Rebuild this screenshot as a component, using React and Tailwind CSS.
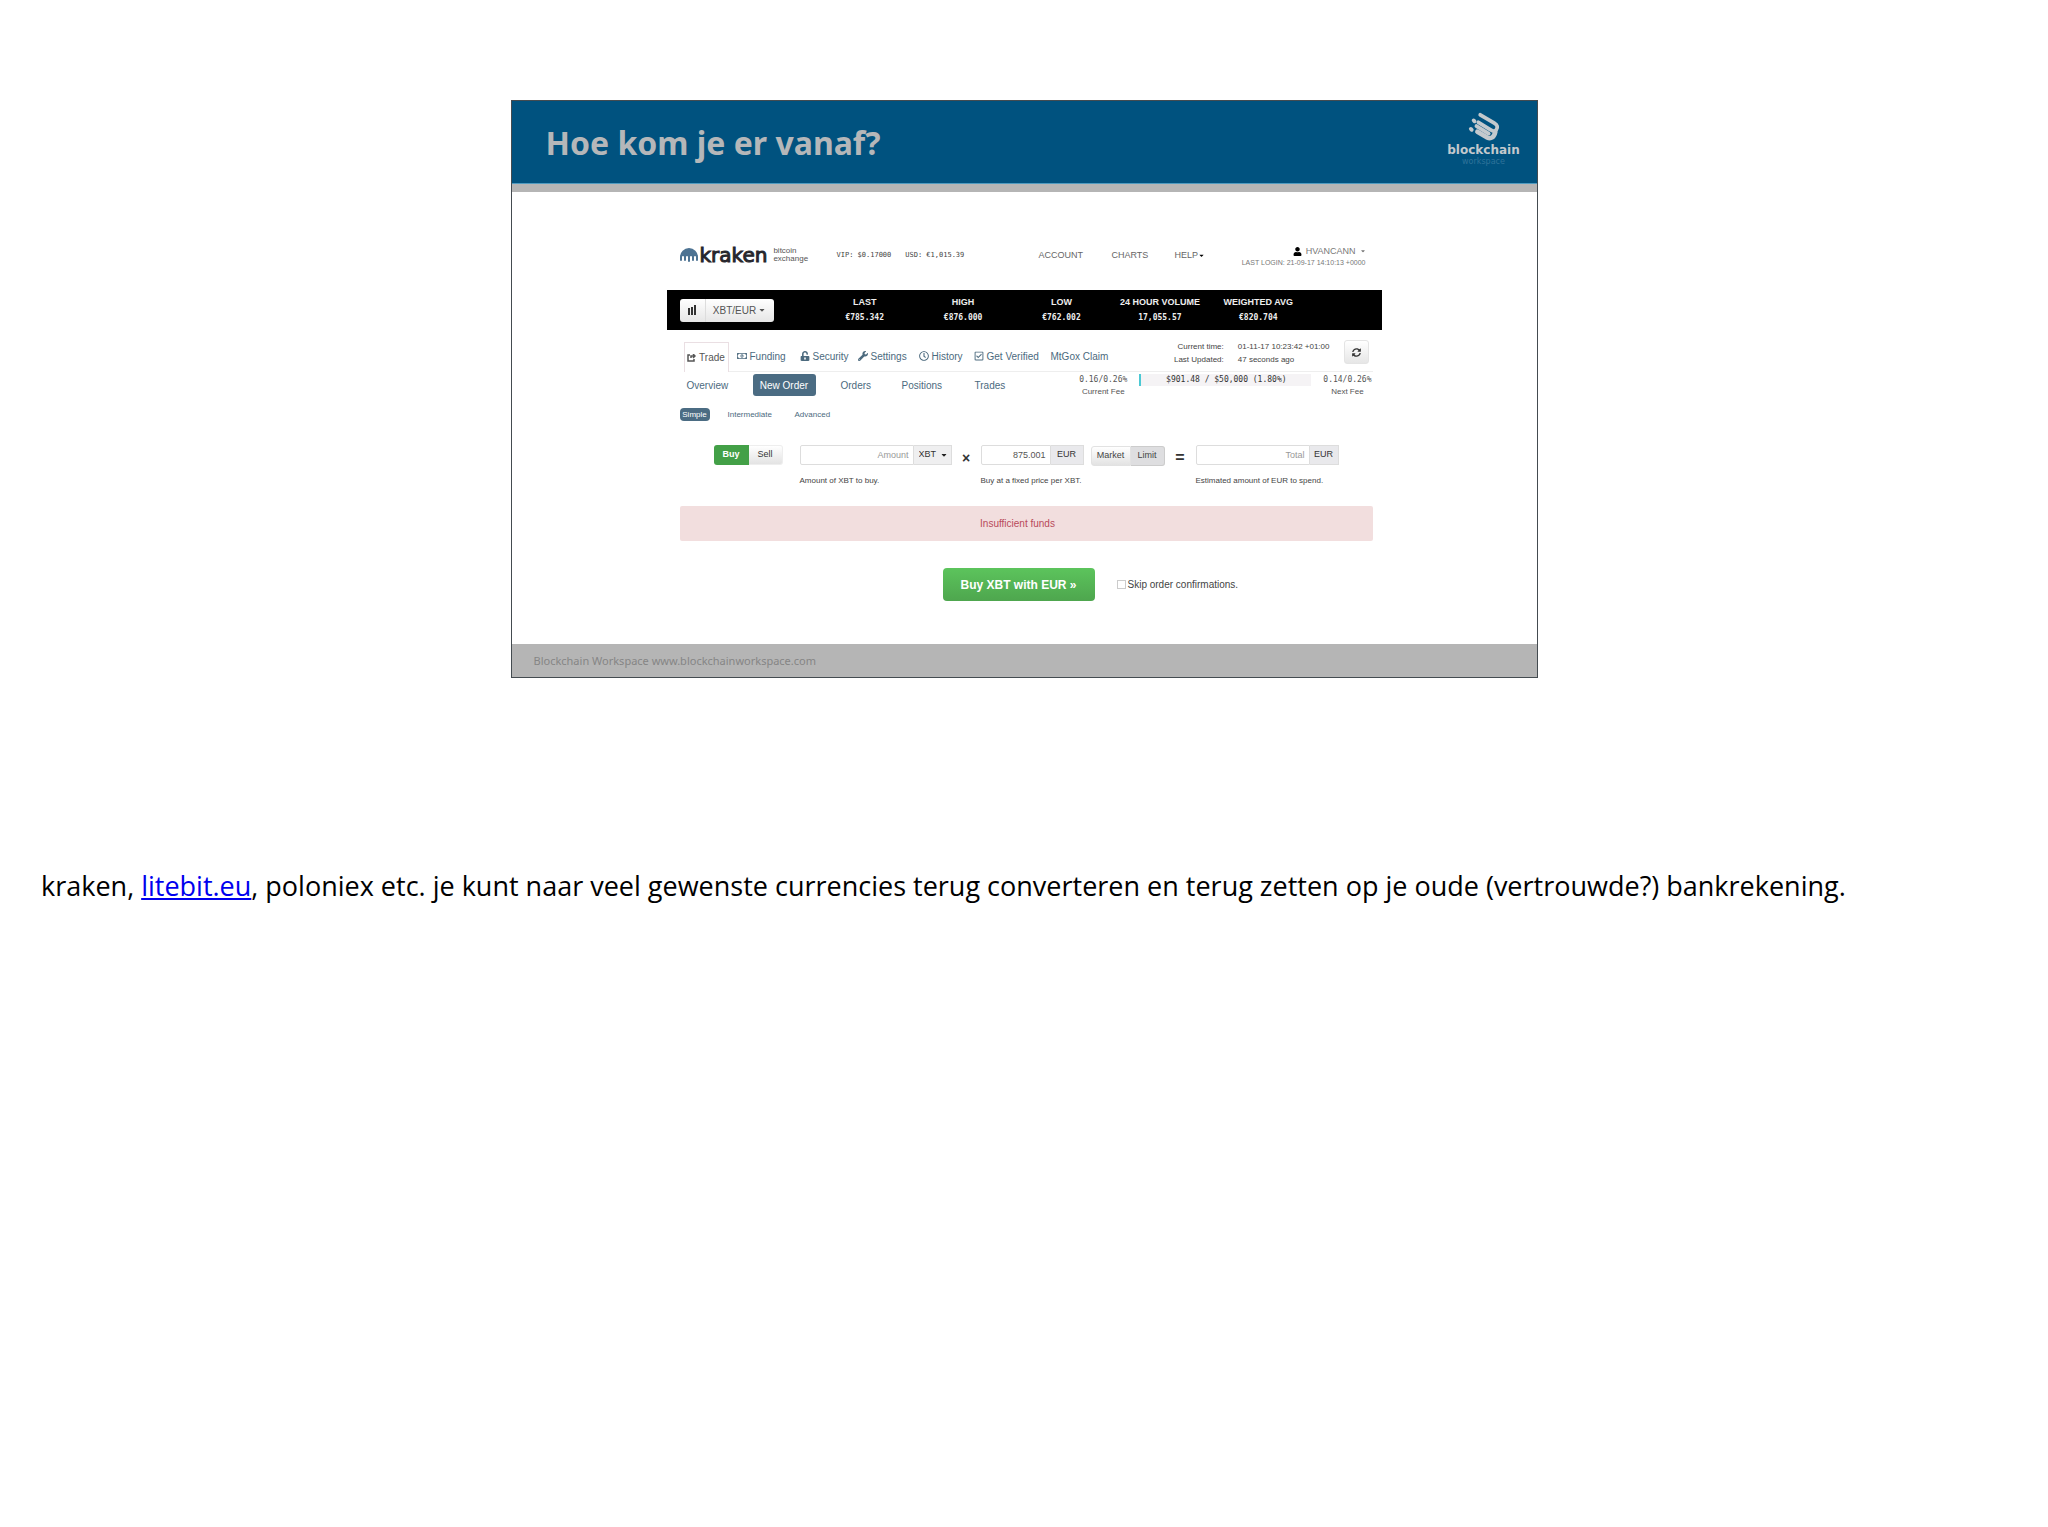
import { useState } from "react";
import {
  FaUser, FaWrench, FaRegClock, FaRegCheckSquare, FaUnlockAlt,
  FaRegMoneyBillAlt, FaSyncAlt, FaCaretDown,
} from "react-icons/fa";

const STATS = [
  { label: "LAST", value: "€785.342" },
  { label: "HIGH", value: "€876.000" },
  { label: "LOW", value: "€762.002" },
  { label: "24 HOUR VOLUME", value: "17,055.57" },
  { label: "WEIGHTED AVG", value: "€820.704" },
];

const TABS = [
  { label: "Funding", icon: FaRegMoneyBillAlt, width: "w-[63px]" },
  { label: "Security", icon: FaUnlockAlt, width: "w-[58px]" },
  { label: "Settings", icon: FaWrench, width: "w-[61px]" },
  { label: "History", icon: FaRegClock, width: "w-[55px]" },
  { label: "Get Verified", icon: FaRegCheckSquare, width: "w-[77px]" },
];

function BlockchainLogo() {
  return (
    <div className="flex w-[78px] flex-col items-center text-[#c3c9cd]">
      <svg viewBox="0 0 36 34" className="h-[32px] w-[34px]" fill="none" stroke="currentColor" strokeLinecap="round" strokeLinejoin="round">
        <path strokeWidth="4" d="M14 4 L29 13 Q34 16 31 20 Q29 23 25 20 L12 12" />
        <path strokeWidth="5" d="M30 22 Q28 31 21 28 L11 22" />
        <path strokeWidth="4" d="M10 16 L23 24" />
        <path strokeWidth="4" d="M7 10 L8 11 M4 19 L5 20" />
      </svg>
      <span className="font-['DejaVu_Sans'] text-[12px] font-bold leading-[14px]">blockchain</span>
      <span className="font-['DejaVu_Sans'] text-[8px] leading-[9px] text-[#2f739a]">workspace</span>
    </div>
  );
}

function KrakenLogo() {
  return (
    <div className="flex w-[157px] items-center">
      <svg viewBox="0 0 18 14" className="mr-[2px] h-[14px] w-[18px]" fill="#4d7393">
        <path d="M0 12V9a9 9 0 0 1 18 0v3a1 1 0 0 1-2 0V9a1 1 0 0 0-2 0v3a1 1 0 0 1-2 0V9a1 1 0 0 0-2 0v4a1 1 0 0 1-2 0V9a1 1 0 0 0-2 0v3a1 1 0 0 1-2 0V9a1 1 0 0 0-2 0v3a1 1 0 0 1-2 0z" />
      </svg>
      <span className="font-['DejaVu_Sans'] text-[20px] leading-[20px] text-[#26262c] [-webkit-text-stroke:1px_#26262c]">kraken</span>
      <span className="ml-[6px] text-[8px] leading-[8px] text-[#555]">bitcoin<br />exchange</span>
    </div>
  );
}

function TopBar() {
  return (
    <div className="flex h-[45px] items-start pl-[13px] pr-4">
      <KrakenLogo />
      <div className="mt-[4px] flex w-[202px] gap-[14px] font-['DejaVu_Sans_Mono'] text-[7px] leading-[12px] text-[#444]">
        <span>VIP: $0.17000</span>
        <span>USD: €1,015.39</span>
      </div>
      <nav className="mt-[3px] flex text-[9px] leading-[14px] text-[#666]">
        <a href="#account" className="w-[73px]">ACCOUNT</a>
        <a href="#charts" className="w-[63px]">CHARTS</a>
        <a href="#help" className="flex items-center">HELP<FaCaretDown size={7} className="text-black" /></a>
      </nav>
      <div className="ml-auto text-right text-[#777]">
        <button className="flex w-full items-center justify-end gap-1 text-[9px] leading-[12px]">
          <FaUser size={9} className="text-black" />HVANCANN<FaCaretDown size={6} />
        </button>
        <p className="text-[7px] leading-[11px]">LAST LOGIN: 21-09-17 14:10:13 +0000</p>
      </div>
    </div>
  );
}

function Ticker() {
  return (
    <div className="flex h-[40px] items-center bg-black pl-[13px]">
      <button className="flex h-[23px] w-[94px] items-center rounded-[3px] bg-linear-to-b from-white to-[#e6e6e6] text-[10px] text-[#555]">
        <span className="flex h-full w-[26px] items-center justify-center border-r border-[#ddd]">
          <svg viewBox="0 0 8 10" className="h-[10px] w-[8px]" fill="#333">
            <path d="M0 3h2v7H0zM3 2h2v8H3zM6 0h2v10H6z" />
          </svg>
        </span>
        <span className="flex flex-1 items-center justify-center gap-[2px]">XBT/EUR<FaCaretDown size={8} /></span>
      </button>
      <dl className="ml-[42px] grid w-[492px] grid-cols-5 text-center text-[#eee]">
        {STATS.map((s) => (
          <div key={s.label}>
            <dt className="whitespace-nowrap text-[9px] font-bold leading-[16px]">{s.label}</dt>
            <dd className="font-['DejaVu_Sans_Mono'] text-[8px] font-bold leading-[16px]">{s.value}</dd>
          </div>
        ))}
      </dl>
    </div>
  );
}

function Tabs() {
  return (
    <div className="ml-[17px] mr-[9px] mt-[11px] flex h-[31px] items-end border-b border-[#eee] text-[10px] text-[#4c6a7e]">
      <a href="#trade" className="-mb-px mr-2 flex h-[30px] w-[45px] items-center justify-center gap-[3px] border border-b-0 border-[#eadfe3] bg-white text-[#555]">
        <svg viewBox="0 0 9 8" className="h-[8px] w-[9px]" fill="none" stroke="currentColor" strokeWidth="1.5">
          <path d="M3 1H1v6h6V5M4 4V2h4M6 0l2 2-2 2" />
        </svg>
        Trade
      </a>
      <nav className="flex h-[30px] items-center whitespace-nowrap">
        {TABS.map(({ label, icon: Icon, width }) => (
          <a key={label} href={"#" + label} className={`flex items-center gap-[3px] ${width}`}>
            <Icon size={10} className="shrink-0" />{label}
          </a>
        ))}
        <a href="#mtgox">MtGox Claim</a>
      </nav>
      <div className="ml-auto flex h-[31px] items-start">
        <table className="text-[8px] leading-[13px] text-[#444]">
          <tbody>
            <tr><th scope="row" className="pr-[14px] text-right font-normal">Current time:</th><td>01-11-17 10:23:42 +01:00</td></tr>
            <tr><th scope="row" className="pr-[14px] text-right font-normal">Last Updated:</th><td>47 seconds ago</td></tr>
          </tbody>
        </table>
        <button aria-label="Refresh" className="ml-[14px] mr-1 flex h-[24px] w-[25px] items-center justify-center rounded-[3px] border border-[#e4e4e4] bg-linear-to-b from-white to-[#e6e6e6] text-[#333]">
          <FaSyncAlt size={9} />
        </button>
      </div>
    </div>
  );
}

function SubNav() {
  return (
    <div className="flex items-start pl-5 pr-[10px] pt-[2px] text-[10px] text-[#4c6a7e]">
      <nav className="flex h-[22px] items-center">
        <a href="#overview" className="w-[66px]">Overview</a>
        <a href="#new-order" className="mr-[25px] flex h-[22px] w-[63px] items-center justify-center rounded-[3px] bg-[#4b6c83] text-white">New Order</a>
        <a href="#orders" className="w-[61px]">Orders</a>
        <a href="#positions" className="w-[73px]">Positions</a>
        <a href="#trades">Trades</a>
      </nav>
      <div className="ml-auto flex gap-3 text-center text-[8px] leading-[12px] text-[#555]">
        <p><span className="font-['DejaVu_Sans_Mono']">0.16/0.26%</span><br />Current Fee</p>
        <div className="h-[12px] w-[172px] border-l-2 border-[#4cc9d4] bg-[#f5f3f5] font-['DejaVu_Sans_Mono'] text-[#333]">$901.48 / $50,000 (1.80%)</div>
        <p><span className="font-['DejaVu_Sans_Mono']">0.14/0.26%</span><br />Next Fee</p>
      </div>
    </div>
  );
}

const INPUT = "h-[20px] min-w-0 rounded-l-[2px] border border-[#ddd] bg-white px-1 text-right text-[9px] text-[#555] placeholder:text-[#999]";
const ADDON = "flex h-[20px] items-center justify-center border border-l-0 border-[#ddd] bg-[#e9e9ec] text-[9px] text-[#333]";
const HELP = "mt-[10px] block whitespace-nowrap text-[8px] leading-[12px] text-[#444]";

function OrderForm() {
  const [price, setPrice] = useState("875.001");
  return (
    <form onSubmit={(e) => e.preventDefault()}>
      <div className="mt-[24px] flex items-start pl-[47px]">
        <div className="flex text-[9px]">
          <button type="button" className="h-[20px] w-[35px] rounded-l-[3px] bg-[#43a047] font-bold text-white">Buy</button>
          <button type="button" className="h-[20px] w-[34px] rounded-r-[3px] border border-l-0 border-[#eee] bg-linear-to-b from-white to-[#e3e3e3] text-[#333]">Sell</button>
        </div>
        <label className="ml-[17px] block">
          <span className="flex">
            <input className={`${INPUT} w-[114px]`} placeholder="Amount" />
            <span className="relative flex h-[20px]">
              <select aria-label="Currency" className="h-[20px] w-[38px] appearance-none border border-l-0 border-[#ddd] bg-[#efeff0] pl-[5px] text-[9px] text-[#333]">
                <option>XBT</option>
              </select>
              <FaCaretDown size={8} className="pointer-events-none absolute right-[4px] top-[6px] text-[#222]" />
            </span>
          </span>
          <span className={HELP}>Amount of XBT to buy.</span>
        </label>
        <span className="mt-[3px] w-[29px] text-center text-[14px] font-bold leading-[20px] text-[#333]">×</span>
        <label className="block">
          <span className="flex">
            <input className={`${INPUT} w-[70px]`} value={price} onChange={(e) => setPrice(e.target.value)} />
            <span className={`${ADDON} w-[33px]`}>EUR</span>
          </span>
          <span className={HELP}>Buy at a fixed price per XBT.</span>
        </label>
        <div className="ml-[7px] mt-px flex text-[9px] text-[#444]">
          <button type="button" className="h-[20px] w-[40px] rounded-l-[3px] border border-[#e2e2e2] bg-linear-to-b from-white to-[#e3e3e3]">Market</button>
          <button type="button" className="h-[20px] w-[34px] rounded-r-[3px] border border-l-0 border-[#ccc] bg-[#dedee0]">Limit</button>
        </div>
        <span className="mt-[3px] w-[31px] text-center text-[16px] font-bold leading-[20px] text-[#333]">=</span>
        <label className="block">
          <span className="flex">
            <input className={`${INPUT} w-[114px]`} placeholder="Total" />
            <span className={`${ADDON} w-[29px]`}>EUR</span>
          </span>
          <span className={HELP}>Estimated amount of EUR to spend.</span>
        </label>
      </div>

      <p role="alert" className="ml-[13px] mr-[9px] mt-[19px] rounded-[2px] bg-[#f2dede] pr-[17px] text-center text-[10px] leading-[35px] text-[#b94a5a]">
        Insufficient funds
      </p>

      <div className="mt-[27px] flex items-center pl-[276px]">
        <button className="h-[33px] w-[152px] rounded-[4px] bg-linear-to-b from-[#5cc45c] to-[#4ea64e] text-[12px] font-bold text-white">
          Buy XBT with EUR »
        </button>
        <label className="ml-[22px] flex items-center gap-[2px] text-[10px] text-[#444]">
          <input type="checkbox" className="size-[9px] appearance-none border border-[#ccc]" />
          Skip order confirmations.
        </label>
      </div>
    </form>
  );
}

export default function App() {
  return (
    <main className="bg-white px-[41px] pt-[100px]">
      <section className="mx-auto w-full max-w-[1027px] border border-[#444b50] bg-white">
        <header className="flex h-[83px] items-start justify-between border-b border-[#4f9bc0] bg-[#00527f] pl-[34px] pr-[14px]">
          <h1 className="pt-[20px] font-['Noto_Sans'] text-[32px] font-bold leading-[44px] text-[#b5b7b9]">Hoe kom je er vanaf?</h1>
          <div className="pt-[10px]"><BlockchainLogo /></div>
        </header>
        <div className="h-[8px] bg-[#b5b5b5]" />

        <div className="mx-auto w-full max-w-[715px] pb-[43px] pt-[53px] font-['Liberation_Sans',sans-serif]">
          <TopBar />
          <Ticker />
          <Tabs />
          <SubNav />
          <nav className="mt-[10px] flex h-[13px] items-center pl-[13px] text-[8px] text-[#4c6a7e]">
            <a href="#simple" className="mr-[18px] flex h-[13px] w-[30px] items-center justify-center rounded-[4px] bg-[#4b6c83] text-white">Simple</a>
            <a href="#intermediate" className="w-[67px]">Intermediate</a>
            <a href="#advanced">Advanced</a>
          </nav>
          <OrderForm />
        </div>

        <footer className="bg-[#b5b5b5] pl-[22px] pt-px font-['Noto_Sans'] text-[11px] leading-[32px] text-[#858585]">
          Blockchain Workspace www.blockchainworkspace.com
        </footer>
      </section>

      <p className="mt-[190px] font-['Trebuchet_MS','Open_Sans',sans-serif] text-[27px] leading-[36px] text-black">
        kraken, <a href="https://litebit.eu" className="text-[#0000ee] underline">litebit.eu</a>, poloniex etc. je kunt naar veel gewenste currencies terug converteren en terug zetten op je oude (vertrouwde?) bankrekening.
      </p>
    </main>
  );
}
